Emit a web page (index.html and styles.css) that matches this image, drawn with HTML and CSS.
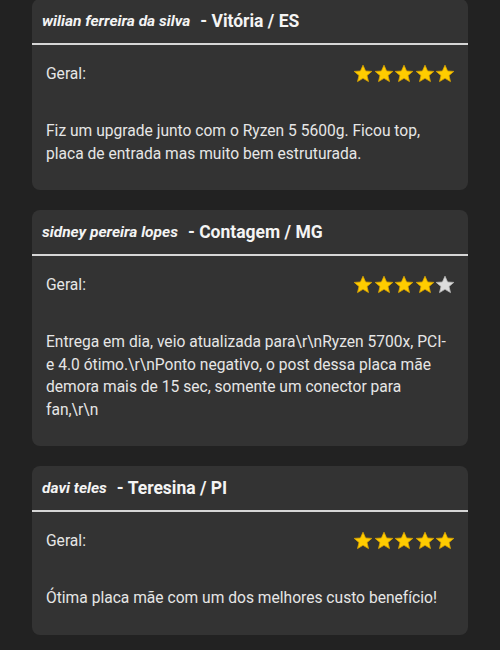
FILE: index.html
```html
<!DOCTYPE html>
<html lang="pt-BR">
<head>
<meta charset="utf-8">
<link rel="stylesheet" href="styles.css">
</head>
<body>
<svg width="0" height="0" class="defs" aria-hidden="true">
  <defs>
    <polygon id="star" points="10,1.2 12.6,7 18.8,7.4 14,11.5 15.5,17.6 10,14.3 4.5,17.6 6,11.5 1.2,7.4 7.4,7"/>
  </defs>
</svg>
<main class="list">
  <section class="card">
    <header class="card-head"><span class="name">wilian ferreira da silva</span><span class="place">- Vitória / ES</span></header>
    <div class="card-body">
      <div class="rating">
        <span class="label">Geral:</span>
        <span class="stars">
          <svg viewBox="0 0 20 20" class="star on"><use href="#star"/></svg><svg viewBox="0 0 20 20" class="star on"><use href="#star"/></svg><svg viewBox="0 0 20 20" class="star on"><use href="#star"/></svg><svg viewBox="0 0 20 20" class="star on"><use href="#star"/></svg><svg viewBox="0 0 20 20" class="star on"><use href="#star"/></svg>
        </span>
      </div>
      <p class="text">Fiz um upgrade junto com o Ryzen 5 5600g. Ficou top, placa de entrada mas muito bem estruturada.</p>
    </div>
  </section>
  <section class="card">
    <header class="card-head"><span class="name">sidney pereira lopes</span><span class="place">- Contagem / MG</span></header>
    <div class="card-body">
      <div class="rating">
        <span class="label">Geral:</span>
        <span class="stars">
          <svg viewBox="0 0 20 20" class="star on"><use href="#star"/></svg><svg viewBox="0 0 20 20" class="star on"><use href="#star"/></svg><svg viewBox="0 0 20 20" class="star on"><use href="#star"/></svg><svg viewBox="0 0 20 20" class="star on"><use href="#star"/></svg><svg viewBox="0 0 20 20" class="star off"><use href="#star"/></svg>
        </span>
      </div>
      <p class="text">Entrega em dia, veio atualizada para\r\nRyzen 5700x, PCI-e 4.0 ótimo.\r\nPonto negativo, o post dessa placa mãe demora mais de 15 sec, somente um conector para fan,\r\n</p>
    </div>
  </section>
  <section class="card">
    <header class="card-head"><span class="name">davi teles</span><span class="place">- Teresina / PI</span></header>
    <div class="card-body">
      <div class="rating">
        <span class="label">Geral:</span>
        <span class="stars">
          <svg viewBox="0 0 20 20" class="star on"><use href="#star"/></svg><svg viewBox="0 0 20 20" class="star on"><use href="#star"/></svg><svg viewBox="0 0 20 20" class="star on"><use href="#star"/></svg><svg viewBox="0 0 20 20" class="star on"><use href="#star"/></svg><svg viewBox="0 0 20 20" class="star on"><use href="#star"/></svg>
        </span>
      </div>
      <p class="text">Ótima placa mãe com um dos melhores custo benefício!</p>
    </div>
  </section>
</main>
</body>
</html>
```
FILE: styles.css
```css
html, body {
  margin: 0;
  padding: 0;
  background: #222222;
}
body {
  font-family: Roboto, "Liberation Sans", sans-serif;
  color: #e6e6e6;
}
.defs {
  position: absolute;
  width: 0;
  height: 0;
}
.list {
  display: flex;
  flex-direction: column;
  gap: 20px;
  padding: 0 32px 20px 32px;
  margin-top: -1px;
}
.card {
  background: #333333;
  border-radius: 8px;
}
.card-head {
  height: 44px;
  display: flex;
  align-items: center;
  gap: 10px;
  padding: 0 10px;
  border-bottom: 2px solid #d6d6d6;
  color: #f4f4f4;
  white-space: nowrap;
}
.name {
  font-style: italic;
  font-weight: 700;
  font-size: 15.5px;
}
.place {
  font-weight: 700;
  font-size: 17.5px;
}
.card-body {
  padding: 19px 14px 25px 14px;
}
.rating {
  display: flex;
  justify-content: space-between;
  align-items: center;
  height: 20px;
}
.label {
  font-size: 15.6px;
}
.stars {
  display: flex;
  gap: 0.5px;
  margin-right: -1px;
}
.star {
  width: 20px;
  height: 20px;
  display: block;
}
.star.on {
  fill: #ffcc00;
  stroke: #d9a300;
  stroke-width: 0.8;
  stroke-linejoin: round;
}
.star.off {
  fill: #dcdcdc;
  stroke: #b8b8b8;
  stroke-width: 0.8;
  stroke-linejoin: round;
}
.text {
  margin: 36px 0 0 0;
  font-size: 15.6px;
  line-height: 22.5px;
}
```
